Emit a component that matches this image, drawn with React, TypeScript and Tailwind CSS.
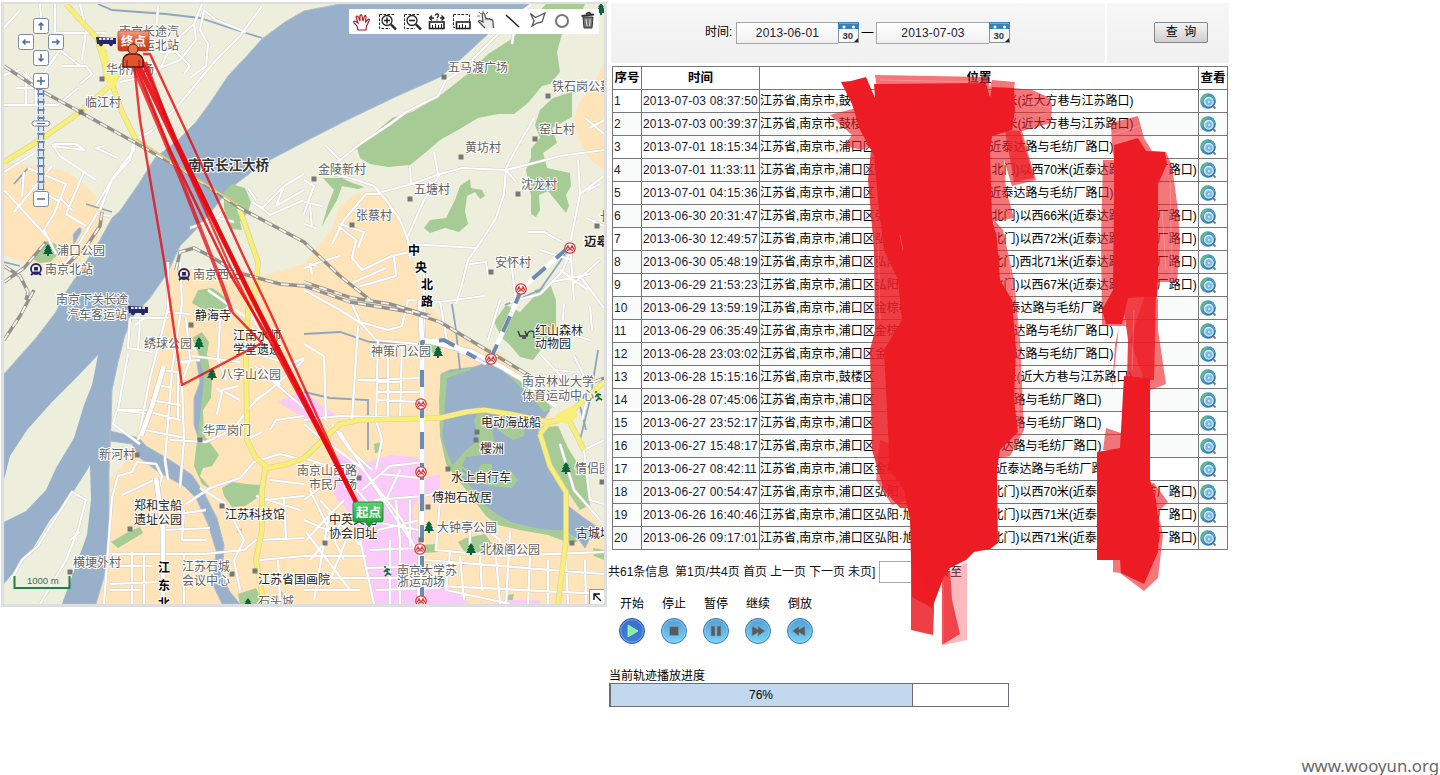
import React from 'react';

const WATER = [
  'M340 4 L304 11 L285 22 L262 39 L245 58 L228 76 L210 103 L196 122 L178 140 L155 158 L138 185 L120 211 L112 218 L100 240 L84 265 L66 292 L56 312 L36 338 L4 374 L4 604 L96 604 L106 570 L109 530 L109 470 L111 425 L112 390 L118 362 L125 335 L134 315 L150 298 L168 272 L180 246 L204 221 L228 190 L262 164 L304 142 L345 121 L395 97 L440 77 L462 58 L488 34 L522 12 L530 4 Z',
  'M110 431 L139 438 L146 446 L170 460 L192 475 L204 493 L217 518 L224 545 L222 575 L230 592 L240 604 L222 604 L213 585 L216 550 L208 524 L196 498 L184 486 L160 473 L140 458 L132 444 L110 441 Z',
  'M441 374 L450 370 L474 367 L486 363 L502 366 L520 382 L540 398 L550 410 L540 425 L538 436 L552 462 L562 486 L567 505 L584 518 L596 526 L585 548 L579 540 L565 531 L545 530 L520 527 L500 517 L488 508 L470 490 L458 476 L449 462 L442 440 L440 400 Z',
  'M196 358 L207 362 L203 400 L199 440 L194 425 L194 398 L200 382 Z',
  'M73 235 Q82 222 81 232 L74 244 Z',
];
const LAND = [
  'M98 355 L92 385 L84 405 L74 438 L56 468 L46 490 L26 511 L4 522 L4 480 L10 456 L27 430 L52 402 L78 376 Z',
  'M90 465 L86 472 L68 500 L50 520 L32 550 L4 584 L4 604 L62 604 L75 568 L87 535 L91 500 Z',
];
const URBAN = [
  'M4 162 L40 166 L68 172 L84 184 L98 198 L107 214 L97 240 L80 262 L62 267 L35 265 L4 255 Z',
  'M168 264 L190 270 L236 268 L262 276 L304 264 L318 246 L330 232 L340 206 L356 194 L375 191 L387 196 L393 206 L406 230 L414 260 L419 292 L440 318 L464 338 L500 352 L520 374 L560 408 L604 470 L604 604 L96 604 L106 570 L110 530 L110 480 L125 462 L137 442 L118 428 L140 400 L160 350 L168 310 Z',
  'M604 62 L596 80 L578 104 L574 122 L580 142 L590 160 L604 170 Z',
];
const CREAM = ['M570 372 L604 372 L604 530 L584 505 L572 455 L548 412 Z', 'M128 326 L160 318 L158 360 L146 392 L136 436 L110 430 L113 385 Z'];
const GREEN = [
  'M357 148 L364 142 L392 118 L412 112 L442 94 L470 72 L488 54 L510 40 L530 22 L546 4 L585 4 L578 20 L562 34 L557 52 L560 72 L550 84 L542 86 L528 103 L514 114 L498 114 L478 118 L458 130 L440 140 L425 153 L410 165 L388 167 L370 164 L360 158 Z',
  'M572 92 L553 98 L540 110 L535 125 L540 138 L531 149 L531 158 L526 170 L531 195 L531 214 L536 217 L540 210 L539 195 L548 191 L566 213 L569 206 L566 195 L571 186 L570 173 L547 168 L543 153 L557 143 L552 128 L572 117 Z',
  'M470 179 L460 186 L455 200 L446 218 L430 220 L424 228 L430 233 L445 228 L459 232 L468 224 L465 211 L467 196 L475 192 L480 199 L485 196 L482 190 L471 188 Z',
  'M323 178 L342 178 L350 182 L364 187 L358 189 L342 186 L337 200 L330 212 L322 226 L328 205 L334 190 Z',
  'M224 192 L232 184 L245 188 L251 202 L248 212 L240 222 L242 230 L232 229 L224 212 Z',
  'M34 260 L38 248 L47 241 L56 244 L59 254 L50 262 L40 263 Z',
  'M192 303 L198 290 L212 288 L220 293 L230 303 L222 318 L204 310 Z',
  'M192 338 L202 332 L209 342 L207 354 L212 380 L211 398 L203 410 L204 435 L219 455 L212 466 L203 468 L200 476 L212 490 L202 484 L194 466 L197 440 L202 400 L204 376 L198 352 Z',
  'M222 488 L232 482 L246 484 L262 485 L257 498 L245 506 L232 507 L224 496 Z',
  'M111 542 L130 531 L140 527 L143 533 L118 548 Z',
  'M236 532 L242 528 L241 534 Z', 'M238 594 L256 588 L264 604 L240 604 Z', 'M280 590 L288 598 L286 604 L276 604 Z',
  'M506 305 L520 312 L540 290 L550 284 L556 300 L556 328 L547 342 L533 360 L520 357 L510 345 L502 338 L494 322 Z',
  'M534 290 L541 304 L551 304 L551 286 Z',
  'M422 344 L442 342 L440 352 L434 354 L428 348 Z',
  'M441 374 L474 367 L470 370 L447 378 L442 440 L452 464 L490 510 L510 522 L545 530 L565 530 L578 541 L572 544 L548 535 L520 530 L498 525 L486 516 L446 464 L440 436 L439 400 Z',
  'M474 420 L480 410 L492 422 L494 443 L484 455 L466 457 L462 466 L474 474 L482 464 L492 464 L492 478 L510 470 L518 480 L512 488 L488 486 L468 476 L456 476 L452 466 L466 450 L478 440 Z',
  'M498 430 L510 420 L525 424 L524 436 L513 440 Z',
  'M502 370 L530 385 L552 408 L544 412 L530 396 Z', 'M540 428 L558 426 L568 448 L588 480 L590 505 L580 510 L568 492 L552 464 Z',
  'M374 444 L381 442 L382 452 L375 453 Z', 'M458 542 L466 538 L485 534 L492 544 L480 552 L466 554 Z',
  'M593 548 L604 550 L604 560 L594 556 Z', 'M422 545 L436 544 L438 552 L424 553 Z', 'M508 595 L514 594 L512 604 L507 604 Z',
];
const PINK = [
  'M278 402 L304 390 L322 406 L338 416 L325 420 L308 424 L304 418 Z',
  'M328 468 L340 452 L362 464 L390 455 L424 458 L424 490 L412 510 L420 540 L418 604 L374 604 L366 560 L360 530 L344 506 L334 495 Z',
  'M424 478 L440 474 L440 488 L424 496 Z', 'M424 580 L448 585 L470 604 L424 604 Z', 'M498 600 L540 600 L540 604 L498 604 Z', 'M325 468 L356 482 L348 500 L338 502 Z',
];
const MINOR = [
  'M4 28 L20 10 M55 33 L55 4 M40 4 L42 32 M55 33 L105 33 M4 75 L20 70 M22 72 L36 84 L36 104 M4 105 L58 105 L78 88 M16 88 L38 88 M26 72 L26 104 M55 33 L60 50 L36 84 M60 50 L80 66',
  'M202 4 L194 24 L180 36 L166 56 L160 70 L148 76 L120 82 M204 10 L216 20 L246 32 M204 10 L200 30 L208 44 L206 66 L190 78 M194 24 L196 40 L180 60 L150 72 M180 36 L176 52 L190 66 L184 74 M176 52 L160 52 M158 6 L156 34 M140 44 L156 42 M262 6 L240 36 L216 60 L196 84 L176 108 L150 132 L134 140 L130 160 L112 180 L100 210',
  'M80 4 L86 30 L82 60 M62 66 L86 66 L92 74 L80 84 M134 142 L134 150 L114 176 L96 206 M118 158 L96 148 L104 146',
  'M54 144 L76 144 L84 150 L52 146 M4 172 L36 152 M52 144 L60 156 L96 180 M4 190 L50 240 M14 212 L52 166 M24 172 L22 196 M28 168 L66 184 L54 214 L44 230 L56 254 M60 198 L72 210 M84 172 L66 214 M32 186 L60 202 M66 214 L86 226 M98 212 L74 252 L62 268 M96 214 L110 216',
  'M304 180 L314 186 L308 202 L304 214 M304 202 L322 206 M310 205 L312 228 M304 224 L316 228 M326 146 L340 160 L322 175',
  'M340 160 L360 144 L390 124 L406 112 L438 96 L446 80 L462 70 L494 38 L524 10 L532 4 M512 44 L514 30 M322 172 L350 178 L374 186 L386 200 L400 220 L408 240 L410 258',
  'M382 192 L412 184 L440 174 L462 168 L506 170 L534 163 L560 156 L604 150 M411 184 L410 166 M438 174 L434 152 M440 174 L424 200 L408 236 M506 168 L520 142 L534 118 M506 168 L504 194 L496 218 L482 240 L468 260 L462 284 L456 304 M506 170 L516 182',
  'M528 232 L544 232 L562 242 M604 176 L580 194 L570 244 L574 300 M580 194 L578 160 M604 120 L590 128 M585 118 L604 134 M588 190 L600 184 M586 218 L604 226',
  'M572 246 L562 272 L540 294 L510 302 M560 270 L588 290 M552 282 L590 274 M580 276 L604 308 M540 250 L572 260 M600 260 L572 285 M470 264 L486 262 L488 276 M410 244 L476 248 M512 268 L516 304',
  'M382 194 L366 194 L344 220 L332 244 M338 226 L356 240 L352 258 L362 270 L392 256 L410 252 M340 224 L364 232 L358 248 M386 268 L350 284 M394 256 L396 276 L354 288 M316 266 L310 264 L312 274 M304 268 L320 262 L340 256',
  'M190 228 L218 218 L234 222 M204 232 L224 210 M252 202 L262 208 L284 186 L304 174 M248 188 L256 200 M276 206 L304 190 M262 208 L270 215 L304 200 M284 186 L276 206',
  'M168 262 L168 308 L160 340 L150 378 L138 440 M180 262 L182 303 L172 370 L165 460 L168 480 M130 318 L168 318 M130 318 L128 348 L152 352 M135 325 L145 318 M140 320 L138 350 M117 410 L152 414 M117 410 L113 424 L140 444 M128 354 L118 410 L152 410 M176 362 L200 360',
  'M150 412 L180 420 M145 430 L185 438 M170 440 L206 442 M158 385 L172 388 M150 400 L180 405 M186 318 L190 360 L182 382 L184 440 L180 488 M168 312 L190 314 M182 340 L196 350 M192 356 L240 362 M160 370 L178 372 L178 420',
  'M206 442 L232 430 L256 400 L270 390 L304 360 M208 290 L250 320 M216 388 L222 392 L217 414 M222 390 L238 386 M225 392 L240 400 M250 352 L290 364 L304 358 M255 366 L304 408 M262 366 L280 385 M250 314 L270 346 M232 300 L220 320 L218 360 L226 380',
  'M186 504 L210 488 L240 478 L254 462 L280 454 L304 460 M137 462 L132 472 L118 476 L112 498 L104 604 M137 462 L156 464 L162 476 L156 500 L164 540 L163 604 M122 495 L154 480 M112 554 L204 554 L244 550 L256 540 L304 538 M132 552 L132 604 M144 554 L144 604 M110 584 L160 582 M164 530 L210 528 M184 554 L184 604 M165 516 L206 510 M184 510 L182 540 L206 540 M118 566 L152 566 M110 590 L140 590',
  'M224 502 L244 540 L234 560 L240 590 M226 504 L200 488 M270 430 L276 420 L304 416 M262 432 L246 440 M270 480 L304 484 M264 500 L304 496 M284 498 L286 540 M256 496 L300 510 M260 560 L304 556 M278 560 L280 600 M262 580 L304 576',
  'M86 500 L72 492 L38 546 L22 560 L10 582 M86 500 L78 530 L66 560 L40 604 M80 532 L70 540',
  'M304 290 L340 310 L362 324 L376 340 L418 344 M352 304 L360 322 L388 330 L402 326 L408 300 M358 326 L352 420 M378 340 L376 420 M402 344 L400 420 M378 392 L420 392 M378 382 L402 382 M358 380 L420 378 M376 400 L420 402 M388 345 L388 420 M304 344 L324 356 L326 420 M304 420 L340 416 L420 418',
  'M340 432 L378 492 L424 560 M324 440 L362 468 L402 520 L420 560 M304 458 L340 470 L372 508 M362 490 L390 466 L424 462 M332 424 L350 450 L372 470 M380 474 L420 478 M374 500 L424 496 M400 470 L386 500 M304 424 L330 446 M376 420 L382 440 L376 470',
  'M304 500 L330 480 M306 540 L344 500 M304 520 L350 540 M310 490 L344 560 M304 556 L366 556 M320 500 L360 545 M304 578 L420 578 M330 510 L314 600 M350 530 L330 580 M306 532 L350 590 M310 560 L344 520 M304 590 L360 590',
  'M360 540 L374 604 M390 540 L390 604 M370 550 L420 548 M366 568 L440 566 M378 530 L420 520 M400 540 L400 604 M376 590 L440 588 M396 500 L400 540 M362 520 L420 530 M410 500 L410 546',
  'M424 496 L440 492 M424 528 L456 530 M440 500 L436 550 L500 556 L604 552 M450 552 L446 590 L510 604 M470 520 L470 548 M484 528 L500 540 L496 556 L500 604 M510 532 L506 604 M530 556 L528 604 M548 560 L548 604 M566 560 L568 604 M424 560 L604 574 M440 586 L604 594 M460 556 L464 600 M480 556 L482 590 M585 560 L586 604',
  'M424 270 L424 340 M408 300 L440 302 L484 296 M440 302 L448 346 L486 364 M500 300 L488 340 M540 354 L576 392 M556 370 L574 372 M556 330 L590 340 M564 304 L562 330 M590 306 L592 330 M574 356 L590 388 L582 420 M604 440 L584 450 L590 500 L604 504 M560 444 L574 490 L600 520',
];
const MAJOR = ['M419 604 L422 500 L422 340 L420 300', 'M163 604 L163 530 L156 478', 'M141 436 L152 406 L164 366', 'M424 340 L472 352 L500 366 L520 378 L556 406'];
const YELLOW = [
  'M66 4 L84 24 L97 38 L105 66 L112 84 L122 112 L136 140', 'M4 162 L40 140 L80 112 L112 84', 'M105 66 L112 84 L118 74 M104 50 L106 80',
  'M239 208 L244 222 L258 262 L256 288', 'M256 288 L248 310 L246 350 L247 440 L256 458 L268 468 L288 464 L304 458 L340 424 L360 420 L440 418 L466 412 L484 410 L510 414 L548 422 L562 420 L604 382',
  'M266 464 L262 490 L262 530 L256 560 L264 604', 'M568 418 L584 450', 'M540 434 L550 466 L566 492 L566 540 L558 604', 'M540 434 L548 424',
];
const RAIL = [
  'M4 66 L40 90 L80 112 L134 142 L180 168 L240 208 L304 242 L340 276 L370 300', 'M4 282 L24 268 L46 242', 'M62 270 L88 244 L100 226 L102 212', 'M4 266 L20 276 L28 292 L26 300',
  'M176 270 L180 252 L194 248 L210 256 L236 272 L280 284 L304 286 L350 302 L410 312 L440 322 L470 340 L530 376', 'M304 282 L352 298 L390 304 L430 316', 'M4 340 L20 316 L34 290', 'M594 382 L604 378',
];
const STREAM = ['M98 4 L112 10 L166 14 L200 18 L230 28 L262 38', 'M304 334 L340 332 L370 342 L420 344', 'M86 204 L112 212', 'M14 184 L28 168', 'M304 392 L330 398 L368 400 L368 450', 'M452 304 L456 330 L460 370', 'M578 398 L586 430', 'M462 470 L478 480', 'M598 350 L590 400 L580 440', 'M568 250 L540 290 L505 305', 'M4 262 L20 266'];
const METRO = ['M422 604 L422 342 L444 340 L476 358', 'M490 360 L512 312 L522 288 L570 246'];

type Label = { x: number; y: number; t: string; dark?: boolean };
const LABELS: Label[] = [
  { x: 119, y: 36, t: '南京长途汽' }, { x: 119, y: 50, t: '车客运北站' }, { x: 106, y: 74, t: '华侨广场' }, { x: 85, y: 107, t: '临江村' },
  { x: 57, y: 255, t: '浦口公园' }, { x: 45, y: 274, t: '南京北站' }, { x: 193, y: 279, t: '南京西站' }, { x: 56, y: 304, t: '南京下关长途' }, { x: 67, y: 319, t: '汽车客运站' },
  { x: 448, y: 72, t: '五马渡广场' }, { x: 552, y: 91, t: '铁石岗公墓' }, { x: 539, y: 134, t: '窑上村' }, { x: 465, y: 152, t: '黄坊村' }, { x: 318, y: 174, t: '金陵新村' },
  { x: 414, y: 194, t: '五塘村' }, { x: 521, y: 189, t: '沈龙村' }, { x: 356, y: 220, t: '张蔡村' }, { x: 495, y: 267, t: '安怀村' }, { x: 600, y: 221, t: '长' },
  { x: 195, y: 320, t: '静海寺', dark: true }, { x: 144, y: 348, t: '绣球公园' }, { x: 233, y: 340, t: '江南水师', dark: true }, { x: 233, y: 354, t: '学堂遗迹', dark: true }, { x: 221, y: 379, t: '八字山公园' },
  { x: 203, y: 435, t: '华严岗门' }, { x: 99, y: 459, t: '新河村' }, { x: 134, y: 510, t: '郑和宝船', dark: true }, { x: 134, y: 524, t: '遗址公园', dark: true }, { x: 225, y: 519, t: '江苏科技馆', dark: true },
  { x: 73, y: 567, t: '横埂外村' }, { x: 182, y: 571, t: '江苏石城' }, { x: 182, y: 585, t: '会议中心' }, { x: 258, y: 584, t: '江苏省国画院', dark: true }, { x: 258, y: 606, t: '石头城' },
  { x: 371, y: 356, t: '神策门公园' }, { x: 535, y: 335, t: '红山森林', dark: true }, { x: 535, y: 348, t: '动物园', dark: true }, { x: 522, y: 386, t: '南京林业大学' }, { x: 522, y: 400, t: '体育运动中心' },
  { x: 481, y: 427, t: '电动海战船', dark: true }, { x: 480, y: 453, t: '櫻洲', dark: true }, { x: 451, y: 482, t: '水上自行车', dark: true }, { x: 432, y: 502, t: '傅抱石故居', dark: true }, { x: 437, y: 532, t: '大钟亭公园' },
  { x: 480, y: 554, t: '北极阁公园' }, { x: 575, y: 473, t: '情侣园' }, { x: 576, y: 538, t: '古城墙', dark: true }, { x: 297, y: 475, t: '南京山西路' }, { x: 309, y: 489, t: '市民广场' },
  { x: 329, y: 524, t: '中英文化', dark: true }, { x: 329, y: 538, t: '协会旧址', dark: true }, { x: 397, y: 575, t: '南京大学苏' }, { x: 397, y: 586, t: '浙运动场' },
];
const DOTS = [[102, 79], [81, 112], [444, 77], [548, 96], [535, 139], [461, 157], [314, 179], [410, 199], [518, 194], [352, 225], [491, 272], [597, 226], [191, 325], [137, 455], [130, 529], [222, 506], [70, 572], [232, 574], [255, 571], [477, 432], [476, 440], [448, 469], [428, 507], [359, 478], [325, 543], [572, 543], [421, 540], [602, 482], [200, 440]];
const TREES = [[48, 250], [199, 343], [212, 374], [438, 352], [566, 468], [429, 527], [471, 549], [248, 604], [601, 9]];
const METRO_STOPS = [[570, 248], [521, 289], [491, 359], [421, 404], [421, 472], [420, 549], [421, 601]];

const TRACKS = [
  { d: 'M134 64 L140 120 L164 260 L182 385 L262 343 L232 312', w: 2.4, o: 0.8 },
  { d: 'M143 54 L150 54 L192 144 L246 262 L270 312 L356 502', w: 2.4, o: 0.8 },
  { d: 'M139 66 L180 152 L250 294 L356 502', w: 4.8, o: 0.9 },
  { d: 'M136 66 L170 150 L230 274 L265 332 L356 502', w: 2.6, o: 0.85 },
  { d: 'M146 62 L180 154 L228 262 L262 330', w: 2.2, o: 0.75 },
  { d: 'M134 68 L182 182 L222 284 L232 312', w: 3.8, o: 0.75 },
  { d: 'M142 60 L176 140 L240 274 L356 502', w: 3.4, o: 0.9 },
];

function TrainMark({ x, y }: { x: number; y: number }) {
  return (
    <g transform={`translate(${x} ${y})`} fill="none" stroke="#27266b" strokeWidth="1.8">
      <circle r="5" />
      <path d="M-5 6 L-2 3.5 H2 L5 6" />
      <rect x="-2" y="-2" width="4" height="3.5" fill="#27266b" strokeWidth="0" />
    </g>
  );
}
function BusMark({ x, y }: { x: number; y: number }) {
  return (
    <g transform={`translate(${x} ${y})`}>
      <path d="M0 0 L20 1 V7 H1 Z" fill="#27266b" />
      <path d="M3 2 H18" stroke="#e8e8f4" strokeWidth="2" strokeDasharray="2.6 1.2" />
      <circle cx="5" cy="7.5" r="1.8" fill="#27266b" /><circle cx="15" cy="7.5" r="1.8" fill="#27266b" />
    </g>
  );
}
function Runner({ x, y }: { x: number; y: number }) {
  return <path transform={`translate(${x} ${y})`} d="M-3 -4 L-1 -4 M3 -1 L0 -2 L-3 1 M-1 -2 L1 2 L-2 5 M1 2 L4 4" fill="none" stroke="#0d6b3c" strokeWidth="1.7" />;
}
function PanButton({ x, y, d }: { x: number; y: number; d: string }) {
  return (
    <g transform={`translate(${x} ${y})`}>
      <rect x="-7.5" y="-7.5" width="15" height="15" rx="2" fill="#fff" stroke="#7b89a5" />
      <path d={d} fill="none" stroke="#4a6da3" strokeWidth="1.5" />
    </g>
  );
}

function Toolbar() {
  return (
    <g>
      <rect x="349" y="9" width="250" height="25" fill="#fff" />
      <path transform="translate(353 14)" d="M5 16 L4 12 L1 9 Q0 7 2 7 L5 9 L3 3 Q4 1 5.500 3 L7 7 L7 1.500 Q8.500 0 9 2 L10 7 L11.500 2 Q13 1 13 3 L12.500 8 L15.500 5 Q17 5 16 7 L13.500 12 L13 16 Z" fill="#fff" stroke="#a31420" strokeWidth="1.1" />
      <g fill="none" stroke="#222">
        <path d="M379.500 14.500 H394 M379.500 14.500 V28.500 H390" strokeDasharray="2.500 1.500" />
        <circle cx="387" cy="20.500" r="5" fill="#fff" strokeWidth="1.300" /><path d="M384 20.500 H390 M387 17.500 V23.500" strokeWidth="1.600" /><path d="M391 24.500 L396 29.500" strokeWidth="2.400" />
        <path d="M404.500 14.500 H419 M404.500 14.500 V28.500 H415" strokeDasharray="2.500 1.500" />
        <circle cx="412" cy="20.500" r="5" fill="#fff" strokeWidth="1.300" /><path d="M409 20.500 H415" strokeWidth="1.600" /><path d="M416 24.500 L421 29.500" strokeWidth="2.400" />
        <rect x="429.500" y="22" width="14.500" height="6.500" strokeWidth="1.600" /><path d="M432.500 25 V28 M435.500 24 V28 M438.500 25 V28 M441.500 24 V28" />
        <path d="M432 15.500 L429.500 18 L432 20.500 M430 18 H434 M441.500 15.500 L444 18 L441.500 20.500 M440 18 H444 M435 15.500 Q437 12.500 438.500 15 Q438.500 16.500 437 18 M437 19.500 V20.500" strokeWidth="1.300" />
        <path d="M453.500 14.500 H469.500 V23 M453.500 14.500 V27.500 H456" strokeDasharray="2.500 1.500" /><rect x="456.500" y="22" width="13.500" height="6.500" strokeWidth="1.600" /><path d="M459.500 25 V28 M462.500 24 V28 M465.500 25 V28" />
      </g>
      <path d="M485 28 L478.500 21.500 Q479 19.500 483 22 L482 13.500 Q483.500 12 484.500 14 L486 19 Q487 17.500 488 19.200 Q489.500 18 490.500 19.800 Q492.500 19 493 21.500 L493.500 28" fill="#ececec" stroke="#555" strokeWidth="1.300" />
      <path d="M479 12 L481 14 M483 10.500 V12 M488 12 L486 14 M477 16 H480" stroke="#777" />
      <path d="M506 15 L519 27" stroke="#222" strokeWidth="1.500" />
      <path d="M530.500 13.500 L535.500 17.500 L545 13 L542 22 L537 23 L532 26 L534 21 Z" fill="none" stroke="#555" strokeWidth="1.300" />
      <circle cx="562" cy="21" r="6" fill="#fff" stroke="#777" strokeWidth="2" />
      <path d="M583 17 L584 28 H592 L593 17 Z" fill="#777" stroke="#333" /><path d="M581.500 16 L594 14.500 M586 14 L589 12.500 L591 14" stroke="#333" strokeWidth="1.800" fill="none" /><path d="M586 19 L587 26 M590 19 L589.500 26" stroke="#ddd" />
    </g>
  );
}

function MapView() {
  return (
    <svg width="608" height="608" viewBox="0 0 608 608" className="block shrink-0" style={{ fontFamily: '"Liberation Sans","Noto Sans CJK SC",sans-serif' }}>
      <defs>
        <clipPath id="mapArea"><rect x="4" y="4" width="600" height="600" /></clipPath>
        <linearGradient id="endPin" x2="0" y2="1"><stop stopColor="#f4a184" /><stop offset=".5" stopColor="#d8512c" /><stop offset="1" stopColor="#c53a1c" /></linearGradient>
        <linearGradient id="startPin" x2="0" y2="1"><stop stopColor="#5dd473" /><stop offset="1" stopColor="#0c9a2c" /></linearGradient>
      </defs>
      <rect x="1" y="2" width="606" height="605" fill="#dcdee0" />
      <g clipPath="url(#mapArea)">
        <rect width="608" height="608" fill="#eeeedd" />
        {URBAN.map((d) => <path key={d} d={d} fill="#fee4b8" />)}
        {CREAM.map((d) => <path key={d} d={d} fill="#eeeedd" />)}
        {WATER.map((d) => <path key={d} d={d} fill="#99b0cb" stroke="#aebdcb" strokeWidth="1" />)}
        {LAND.map((d) => <path key={d} d={d} fill="#eeeedd" />)}
        {GREEN.map((d) => <path key={d} d={d} fill="#a6cb95" />)}
        {PINK.map((d) => <path key={d} d={d} fill="#fcc9fb" />)}
        {STREAM.map((d) => <path key={d} d={d} fill="none" stroke="#8fa6bd" strokeWidth="1.800" />)}
        <g fill="none" strokeLinejoin="round">
          <path d={MINOR.join(' ')} stroke="#d3cfcd" strokeWidth="3.200" />
          <path d={MINOR.join(' ')} stroke="#fff" strokeWidth="2.200" />
          <path d={MAJOR.join(' ')} stroke="#cfcbca" strokeWidth="6" />
          <path d={MAJOR.join(' ')} stroke="#fff" strokeWidth="4.600" />
          <path d={YELLOW.join(' ')} stroke="#d6d0a0" strokeWidth="5.600" />
          <path d={YELLOW.join(' ')} stroke="#f8ee78" strokeWidth="4.400" />
          <path d={RAIL.join(' ')} stroke="#94918c" strokeWidth="3.400" />
          <path d={RAIL.join(' ')} stroke="#f5f3ee" strokeWidth="1.900" strokeDasharray="8 8" />
          <path d={METRO.join(' ')} stroke="#fff" strokeWidth="4.600" />
          <path d={METRO.join(' ')} stroke="#6c8bb0" strokeWidth="4" strokeDasharray="17 14" />
        </g>
        <path d="M556 414 L572 406 L578 416 L568 424 L554 422 Z M97 36 L104 44 L118 84 L108 88 Z" fill="#f8ee78" />
        <path d="M136 139 L238 205" stroke="#e3ca7b" strokeWidth="2" />
        {DOTS.map(([x, y]) => <rect key={`${x}-${y}`} x={x - 2.5} y={y - 2.5} width="5" height="5" fill="#777" />)}
        {TREES.map(([x, y]) => <path key={`${x}-${y}`} transform={`translate(${x} ${y})`} d="M0 -6 L3 -2 H2 L4 1 H3 L5 4 H1 V6 H-1 V4 H-5 L-3 1 H-4 L-2 -2 H-3 Z" fill="#0d6339" />)}
        {METRO_STOPS.map(([x, y]) => (
          <g key={`${x}-${y}`} transform={`translate(${x} ${y})`}>
            <circle r="5.200" fill="#fff" stroke="#d33c40" strokeWidth="1.300" />
            <path d="M-4 1.500 L-2 -2 L0 1.500 L2 -2 L4 1.500 M-2.500 3 L-1.500 1 M2.500 3 L1.500 1" fill="none" stroke="#d33c40" strokeWidth="1.400" />
          </g>
        ))}
        <TrainMark x={36} y={269} /><TrainMark x={184} y={274} />
        <BusMark x={96} y={37} /><BusMark x={128} y={306} />
        <Runner x={387} y={571} /><Runner x={598} y={396} />
        <path d="M518 331 L520 336 H527 L525 331 M527 336 Q528 329 534 332 L534 338 M522 338 H526" fill="none" stroke="#333" strokeWidth="1.300" />
        <g fontSize="12" stroke="#fff" strokeWidth="2.200" strokeLinejoin="round" className="[paint-order:stroke]">
          {LABELS.map((l) => <text key={`${l.x}-${l.y}`} x={l.x} y={l.y} fill={l.dark ? '#222' : '#606060'}>{l.t}</text>)}
          <text x="188" y="170" fontSize="13.500" fontWeight="bold" fill="#333">南京长江大桥</text>
          <text x="584" y="246" fontSize="12.500" fontWeight="bold" fill="#222">迈皋桥</text>
          <g fill="#000" fontWeight="bold">
            <text x="408" y="255">中</text><text x="415" y="272">央</text><text x="421" y="289">北</text><text x="421" y="306">路</text>
            <text x="158" y="572">江</text><text x="158" y="590">东</text><text x="158" y="608">北</text>
          </g>
        </g>
        <g fill="none" stroke="#e60a12" strokeLinejoin="round">
          {TRACKS.map((t) => <path key={t.d} d={t.d} strokeWidth={t.w} opacity={t.o} />)}
        </g>
        <g>
          <path d="M118 32 Q118 31 120 31 H147 Q149 31 149 33 V49 Q149 51 147 51 H120 Q118 51 118 49 Z" fill="url(#endPin)" stroke="#b64a30" strokeWidth=".800" />
          <text x="121" y="45.500" fontSize="12.500" fontWeight="bold" fill="#fff">终点</text>
          <path d="M123 67 V60 Q124 55 129 54 H137 Q142 55 143 60 V67 Z" fill="#e5532c" stroke="#50150a" strokeWidth="1.300" />
          <circle cx="133" cy="49" r="5" fill="#ef7650" stroke="#6a2416" /><path d="M127 67 V60 M139 67 V60" stroke="#6a2416" />
          <path d="M353 504 Q353 502 355 502 H381 Q383 502 383 504 V520 Q383 522 381 522 H373 L369 527 L365 522 H355 Q353 522 353 520 Z" fill="url(#startPin)" stroke="#11752a" strokeWidth=".800" />
          <text x="356" y="516.500" fontSize="12.500" fontWeight="bold" fill="#fff">起点</text>
        </g>
        <Toolbar />
        <g>
          <PanButton x={41} y={26} d="M0 4 V-3 M-2.500 -.500 L0 -3 L2.500 -.500" />
          <PanButton x={26} y={42} d="M4 0 H-3 M-.500 -2.500 L-3 0 L-.500 2.500" />
          <PanButton x={56} y={42} d="M-4 0 H3 M.500 -2.500 L3 0 L.500 2.500" />
          <PanButton x={41} y={58} d="M0 -4 V3 M-2.500 .500 L0 3 L2.500 .500" />
          <path d="M38.500 90 V190 M43.500 90 V190" stroke="#6482b3" strokeWidth="1.200" strokeDasharray="7 1.500" />
          <path d="M41 90 V190" stroke="#dde6f2" strokeWidth="3.500" />
          <path d="M41 93 V190" stroke="#6482b3" strokeWidth="7" strokeDasharray="2 6" />
          <PanButton x={41} y={81} d="M-4 0 H4 M0 -4 V4" /><PanButton x={41} y={199} d="M-4 0 H4" />
          <rect x="32" y="121" width="18" height="5" rx="2.500" fill="#fff" stroke="#7b89a5" /><path d="M37 123.500 H45" stroke="#4a6da3" />
        </g>
        <path d="M14.500 576 V588 H69.500 V576" fill="none" stroke="#217f4c" strokeWidth="2" />
        <text x="27" y="584" fontSize="9.500" fill="#3b6b55">1000 m</text>
        <rect x="589.500" y="589.500" width="15" height="15" fill="#fff" stroke="#999" /><path d="M594 600 V594 H600 M594.500 594.500 L601 601" fill="none" stroke="#111" strokeWidth="1.400" />
      </g>
    </svg>
  );
}

type Row = { time: string; left: string; at: number; right: string };
const GL = '江苏省,南京市,鼓楼区';
const PK = '江苏省,南京市,浦口区';
const TD = '近泰达路与毛纺厂路口)';
const ROWS: Row[] = [
  { time: '2013-07-03 08:37:50', left: GL, at: 973, right: '东107米(近大方巷与江苏路口)' },
  { time: '2013-07-03 00:39:37', left: GL, at: 1005, right: '米(近大方巷与江苏路口)' },
  { time: '2013-07-01 18:15:34', left: PK + '金棕', at: 989, right: TD },
  { time: '2013-07-01 11:33:11', left: PK + '弘阳', at: 991, right: '北门)以西70米(' + TD },
  { time: '2013-07-01 04:15:36', left: PK, at: 989, right: TD },
  { time: '2013-06-30 20:31:47', left: PK + '弘', at: 991, right: '北门)以西66米(' + TD },
  { time: '2013-06-30 12:49:57', left: PK + '弘阳·旭', at: 991, right: '北门)以西72米(' + TD },
  { time: '2013-06-30 05:48:19', left: PK + '弘阳·旭', at: 991, right: '北门)西北71米(' + TD },
  { time: '2013-06-29 21:53:23', left: PK + '弘阳·旭', at: 979, right: '东北门)以西67米(' + TD },
  { time: '2013-06-29 13:59:19', left: PK + '金棕榈', at: 980, right: '米(' + TD },
  { time: '2013-06-29 06:35:49', left: PK + '金棕榈', at: 989, right: TD },
  { time: '2013-06-28 23:03:02', left: PK + '金棕', at: 989, right: TD },
  { time: '2013-06-28 15:15:16', left: GL, at: 1004, right: '米(近大方巷与江苏路口)' },
  { time: '2013-06-28 07:45:06', left: PK, at: 1001, right: '达路与毛纺厂路口)' },
  { time: '2013-06-27 23:52:17', left: PK, at: 1001, right: '达路与毛纺厂路口)' },
  { time: '2013-06-27 15:48:17', left: PK, at: 1001, right: '达路与毛纺厂路口)' },
  { time: '2013-06-27 08:42:11', left: PK + '金棕', at: 979, right: '米(' + TD },
  { time: '2013-06-27 00:54:47', left: PK + '弘阳', at: 979, right: '东北门)以西70米(' + TD },
  { time: '2013-06-26 16:40:46', left: PK + '弘阳·旭', at: 979, right: '东北门)以西71米(' + TD },
  { time: '2013-06-26 09:17:01', left: PK + '弘阳·旭', at: 979, right: '东北门)以西71米(' + TD },
];

function GlobeSearch() {
  return (
    <svg width="18" height="18" viewBox="0 0 18 18" className="mt-px ml-px block">
      <defs><linearGradient id="globe" x2="1" y2="1"><stop stopColor="#5fb0dc" /><stop offset="1" stopColor="#1667a3" /></linearGradient></defs>
      <circle cx="8" cy="8" r="7.800" fill="url(#globe)" />
      <path d="M1 5 Q4 0 8 1 Q6 4 4 6 L2.500 11 Q0 8 1 5 M11 1.500 Q15 4 15 8 L13 5 Z M4 13 L7 15.500 L4.500 14.500 Z" fill="#62b58a" />
      <circle cx="8.800" cy="8.800" r="4.300" fill="#8cc2ec" stroke="#d3eaf8" strokeWidth="1.300" />
      <circle cx="9" cy="9" r="2" fill="#c5e4fa" stroke="#5c9fdc" strokeWidth=".900" />
      <path d="M12.500 12.500 L15.500 15.500" stroke="#777" strokeWidth="1.800" />
    </svg>
  );
}

function CalendarIcon() {
  return (
    <svg width="21" height="21" viewBox="0 0 21 21" className="block shrink-0">
      <rect x=".500" y=".500" width="20" height="20" fill="#f6f7f7" stroke="#8b9197" />
      <rect width="21" height="7" fill="#3d80b8" /><path d="M1 1.500 H20" stroke="#75addb" />
      <circle cx="6" cy="5" r="1.500" fill="#fff" /><circle cx="15.500" cy="5" r="1.500" fill="#fff" />
      <text x="4.500" y="17" fontSize="9.500" fontWeight="bold" fill="#353535" fontFamily="Liberation Sans">30</text>
      <path d="M20 16 V20 H16 Z" fill="#222" />
    </svg>
  );
}

function DateField({ value, width }: { value: string; width: string }) {
  return (
    <div className="flex h-[22px] items-start">
      <div className={`${width} h-[22px] border border-r-0 border-[#a5a5a5] bg-linear-to-b from-white to-[#f0f0f0] text-center text-[12px] leading-[21px] tracking-[0.2px] text-[#24202c]`}>{value}</div>
      <CalendarIcon />
    </div>
  );
}

function PlayerButton({ label, d, active }: { label: string; d: string; active?: boolean }) {
  return (
    <div className="flex w-[42px] flex-col items-center">
      <span className="h-[18px] leading-[18px]">{label}</span>
      <svg width="28" height="28" viewBox="0 0 28 28" className="mt-[4px]">
        <defs>
          <linearGradient id="idle" x2="0" y2="1"><stop stopColor="#4e9fd6" /><stop offset="1" stopColor="#7bd3fa" /></linearGradient>
          <linearGradient id="live" x2="0" y2="1"><stop stopColor="#3d6cc4" /><stop offset="1" stopColor="#3f80dc" /></linearGradient>
        </defs>
        <circle cx="14" cy="14" r="12.500" fill={active ? 'url(#live)' : 'url(#idle)'} stroke={active ? '#2f58ac' : '#3579b3'} />
        <circle cx="14" cy="14" r="11.300" fill="none" stroke="#a5daf7" strokeWidth=".700" opacity=".700" />
        <path d={d} fill={active ? '#82f29b' : '#555b60'} stroke={active ? '#c2f9d0' : '#8197a5'} strokeWidth=".700" />
      </svg>
    </div>
  );
}

function Redaction() {
  return (
    <svg width="400" height="600" viewBox="820 60 400 600" className="pointer-events-none absolute left-[820px] top-[60px]">
      <g fill="#ed1c24">
        <g opacity=".600">
          <path d="M875 75 L988 77 L990 88 L992 80 L1015 82 L1014 88 L1032 90 L1048 97 L1052 104 L1051 123 L1022 131 L1030 160 L1036 180 L1012 186 L1004 160 L1006 190 L1014 218 L990 222 L880 110 Z" />
          <path d="M856 108 L830 115 L852 135 L844 146 L862 150 L880 140 Z" />
          <path d="M1111 123 L1138 116 L1144 138 L1152 151 L1166 152 L1172 166 L1178 210 L1180 245 L1177 282 L1150 282 L1120 180 L1112 150 Z" />
          <path d="M1103 160 L1125 160 L1125 326 L1102 326 L1101 240 Z M1150 280 L1158 300 L1158 330 L1166 384 L1148 391 L1130 340 Z M1128 326 L1119 326 L1112 392 L1115 345 L1120 322 Z M1106 428 L1124 434 L1120 450 L1103 450 Z M1148 482 L1154 483 L1168 502 L1158 512 L1163 535 L1158 578 L1144 591 L1120 573 L1113 572 L1113 560 L1148 548 Z" />
          <path d="M994 220 L1003 230 L1014 280 L1020 340 L1024 430 L1010 456 L990 460 Z M908 500 L892 505 L876 480 L880 440 L908 450 Z" />
        </g>
        <path d="M872 140 L908 150 V508 L900 508 L884 490 L872 450 L870 350 L875 330 L874 250 L868 180 Z" opacity=".850" />
        <path d="M841 82 L851 81 L866 77 L875 98 L874 84 L986 83 L990 98 L992 87 L1014 88 L1015 110 L1012 130 L992 136 L990 150 L992 218 L997 240 L1000 280 L1012 300 L1016 350 L1014 400 L1018 432 L1000 450 L997 470 L998 543 L990 549 L974 552 L966 560 L950 568 L944 577 L932 608 L912 597 L910 520 L904 490 L890 470 L884 350 L902 320 L898 280 L884 250 L878 200 L874 155 L860 130 L852 104 Z" />
        <path d="M1114 145 L1138 138 L1146 151 L1165 152 L1167 164 L1158 184 V280 L1157 296 L1128 298 L1122 324 L1106 324 L1102 310 L1113 290 L1114 200 Z M1124 376 L1150 378 V480 L1156 500 L1159 525 L1158 552 L1144 584 L1121 573 L1120 560 L1097 560 L1097 452 L1120 448 Z" />
        <path d="M1124 434 H1149 V382 H1124 Z" />
        <path d="M1005 130 L1020 131 L1034 178 L1014 182 Z" opacity=".700" />
        <path d="M1122 296 L1156 296 L1154 380 L1127 380 L1128 340 Z M911 560 L934 600 L934 612 L933 635 L911 630 Z" opacity=".850" />
        <path d="M942 576 L950 570 L952 600 L960 634 L942 645 Z" opacity=".750" />
        <path d="M944 574 L967 562 L967 640 L944 645 Z" opacity=".300" />
      </g>
      <g stroke="#ffd0d0" strokeWidth="1" fill="none" opacity=".300">
        <path d="M962 575 V638 M965 570 V640 M1162 210 L1166 270 M1170 180 L1172 280 M1134 310 L1132 370 M1018 320 V430 M1008 250 L1014 300 M878 240 L880 320" />
        <path d="M1112 135 L1140 126 M1020 100 L1050 108 M880 80 L980 82 M1020 120 L1050 112 M900 235 L903 250" />
      </g>
    </svg>
  );
}

export default function App() {
  return (
    <div className="relative flex h-[775px] w-[1440px] items-start overflow-hidden bg-white text-[12px] text-black" style={{ fontFamily: '"Liberation Sans","Noto Sans CJK SC",sans-serif' }}>
      <MapView />
      <main className="flex w-[622px] shrink-0 flex-col">
        <header className="ml-[3px] mt-[3px] flex h-[60px] gap-[2px]">
          <div className="flex w-[494px] items-start bg-linear-to-b from-[#f7f7f7] to-[#f0f0f0] pl-[94px] pt-[19px]">
            <span className="w-[31px] whitespace-nowrap leading-[21px]">时间:</span>
            <DateField value="2013-06-01" width="w-[102px]" />
            <span className="w-[17px] text-center leading-[20px]">—</span>
            <DateField value="2013-07-03" width="w-[113px]" />
          </div>
          <div className="flex w-[122px] items-start bg-linear-to-b from-[#f7f7f7] to-[#f0f0f0] pl-[47px] pt-[19px]">
            <button className="h-[21px] w-[54px] rounded-[2px] border border-[#878787] bg-linear-to-b from-[#f4f4f4] to-[#cfcfcf] text-[12px] leading-[19px]">查&nbsp; 询</button>
          </div>
        </header>
        <table className="ml-[4px] mt-[3px] w-[616px] table-fixed border-collapse">
          <colgroup><col className="w-[29px]" /><col className="w-[118px]" /><col className="w-[439px]" /><col className="w-[29px]" /></colgroup>
          <thead>
            <tr className="h-[23px] leading-[22px]">
              {['序号', '时间', '位置', '查看'].map((h) => <th key={h} className="border border-[#777] p-0 text-[12.500px] font-bold">{h}</th>)}
            </tr>
          </thead>
          <tbody>
            {ROWS.map((r, i) => (
              <tr key={r.time} className={i % 2 ? 'h-[23px] bg-[#f9fbfa]' : 'h-[23px]'}>
                <td className="border border-[#777] p-0 pl-px leading-[22px] text-[#24202c]">{i + 1}</td>
                <td className="whitespace-nowrap border border-[#777] p-0 pl-[1px] leading-[22px] tracking-[0.180px] text-[#24202c]">{r.time}</td>
                <td className="border border-[#777] p-0">
                  <div className="flex h-[22px] overflow-hidden whitespace-nowrap leading-[23px]">
                    <span className="shrink-0 overflow-hidden" style={{ width: r.at - 759.5 }}>{r.left}</span>
                    <span className="shrink-0">{r.right}</span>
                  </div>
                </td>
                <td className="border border-[#777] p-0"><GlobeSearch /></td>
              </tr>
            ))}
          </tbody>
        </table>
        <div className="mt-[11px] flex h-[22px] whitespace-nowrap leading-[22px] text-[#111]">
          <span className="w-[67px]">共61条信息</span>
          <span className="w-[68px]">第1页/共4页</span>
          <span className="w-[27px]">首页</span><span className="w-[39px]">上一页</span><span className="w-[39px]">下一页</span><span className="w-[31px]">未页]</span>
          <span className="h-[22px] w-[57px] border border-[#aaa] bg-white" />
          <span className="ml-[2px] text-[#14143c]">转至</span>
        </div>
        <div className="ml-[3px] mt-[12px] flex">
          <PlayerButton label="开始" active d="M10 8 L20 14 L10 20 Z" />
          <PlayerButton label="停止" d="M9.500 9.500 H18.500 V18.500 H9.500 Z" />
          <PlayerButton label="暂停" d="M9 9 H13 V19 H9 Z M15 9 H19 V19 H15 Z" />
          <PlayerButton label="继续" d="M8 9 L14 12.500 V9 L21 14 L14 19 V15.500 L8 19 Z" />
          <PlayerButton label="倒放" d="M13 9 L6.500 14 L13 19 V15.500 L19 19 V9 L13 12.500 Z" />
        </div>
        <div className="ml-[1px] mt-[22px] h-[16px] leading-[19px]">当前轨迹播放进度</div>
        <div className="relative ml-[1px] flex h-[24px] w-[400px] border border-[#6b6f73] bg-white">
          <div className="h-full w-[303px] border-r border-l border-[#6b6f73] bg-[#c2d8ee]" />
          <span className="absolute left-[139px] top-0 leading-[22px]">76%</span>
        </div>
      </main>
      <div className="mr-px ml-auto self-end whitespace-nowrap text-[16.800px] leading-[19px] text-[#686868]" style={{ fontFamily: '"Noto Sans","Open Sans",sans-serif' }}>www.wooyun.org</div>
      <Redaction />
    </div>
  );
}
